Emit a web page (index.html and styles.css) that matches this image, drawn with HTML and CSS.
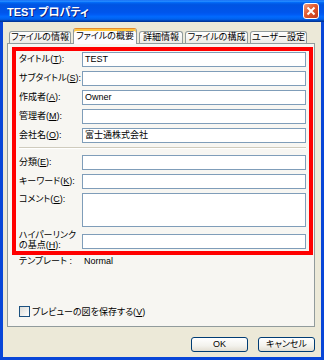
FILE: index.html
```html
<!DOCTYPE html>
<html>
<head>
    <title>TEST プロパティ</title>
    <meta charset="utf-8">
    <link rel="stylesheet" href="styles.css">
</head>
<body>
    <div class="window">
        <div class="titlebar">
            <span class="title">TEST プロパティ</span>
            <span class="close">
                <svg width="16" height="16" viewBox="0 0 16 16">
                    <defs>
                        <linearGradient id="closeGrad" x1="0" y1="0" x2="1" y2="1">
                            <stop offset="0" stop-color="#f4a386"/>
                            <stop offset="0.45" stop-color="#e2592f"/>
                            <stop offset="1" stop-color="#c0361a"/>
                        </linearGradient>
                    </defs>
                    <rect x="0.5" y="0.5" width="15" height="15" rx="2.5" fill="url(#closeGrad)" stroke="#fff"/>
                    <path d="M4.5 4.5 L11.5 11.5 M11.5 4.5 L4.5 11.5" stroke="#fff" stroke-width="2"/>
                </svg>
            </span>
        </div>
        <div class="client">
            <div class="tabs">
                <div class="tab t1">ファイルの情報</div>
                <div class="tab t2 active">ファイルの概要</div>
                <div class="tab t3">詳細情報</div>
                <div class="tab t4">ファイルの構成</div>
                <div class="tab t5">ユーザー設定</div>
            </div>
            <div class="panel">
                <div class="fields">
                    <div class="row"><label>タイトル(<u>T</u>):</label><div class="field">TEST</div></div>
                    <div class="row"><label>サブタイトル(<u>S</u>):</label><div class="field"></div></div>
                    <div class="row"><label>作成者(<u>A</u>):</label><div class="field">Owner</div></div>
                    <div class="row"><label>管理者(<u>M</u>):</label><div class="field"></div></div>
                    <div class="row"><label>会社名(<u>O</u>):</label><div class="field">富士通株式会社</div></div>
                    <div class="sep"></div>
                    <div class="row"><label>分類(<u>E</u>):</label><div class="field"></div></div>
                    <div class="row"><label>キーワード(<u>K</u>):</label><div class="field"></div></div>
                    <div class="row comment"><label>コメント(<u>C</u>):</label><div class="field"></div></div>
                    <div class="row link"><label>ハイパーリンク<br>の基点(<u>H</u>):</label><div class="field"></div></div>
                </div>
                <div class="template"><span class="template-label">テンプレート :</span><span>Normal</span></div>
                <div class="check"><span class="box"></span>プレビューの図を保存する(<u>V</u>)</div>
            </div>
            <div class="buttons">
                <button>OK</button>
                <button>キャンセル</button>
            </div>
        </div>
    </div>
</body>
</html>
```

FILE: styles.css
```css
/* General styling */
* {
    box-sizing: border-box;
}
body {
    margin: 0;
    font-family: "Liberation Sans", "Noto Sans CJK JP", sans-serif;
    font-size: 9px;
    font-feature-settings: "palt";
    color: #000;
}
u {
    text-decoration: underline;
}

/* Window frame */
.window {
    width: 324px;
    height: 360px;
    display: flex;
    flex-direction: column;
}
.titlebar {
    height: 22px;
    flex: none;
    display: flex;
    align-items: center;
    justify-content: space-between;
    padding: 0 5px 0 7px;
    background: linear-gradient(to bottom, #0058ee 0%, #3593ff 4%, #288eff 6%, #127dff 8%, #036ffc 10%, #0262ee 14%, #0057e5 20%, #0054e3 24%, #0055eb 56%, #005bf5 66%, #026afe 76%, #0062ef 86%, #0052d6 92%, #0040ab 94%, #003092 100%);
}
.title {
    color: #fff;
    font-weight: bold;
    font-size: 11px;
    text-shadow: 1px 1px 0 #0a1e80;
}
.close {
    display: flex;
    width: 16px;
    height: 16px;
}
.client {
    flex: 1;
    display: flex;
    flex-direction: column;
    background: #ece9d8;
    border: 3px solid #0846d8;
    border-top: 0;
    padding: 6px 6px 0 4px;
}

/* Tabs */
.tabs {
    display: flex;
    align-items: flex-end;
    gap: 2px;
    height: 15px;
    padding-left: 2px;
}
.tab {
    height: 12px;
    border: 1px solid #919b9c;
    border-bottom: 0;
    border-radius: 3px 3px 0 0;
    background: linear-gradient(to bottom, #fff, #ecebe6);
    line-height: 11px;
    text-align: center;
    white-space: nowrap;
}
.tab.active {
    height: 16px;
    margin-bottom: -1px;
    position: relative;
    z-index: 1;
    background: #fcfcfe;
    border-top: 1px solid #e68b2c;
    box-shadow: inset 0 2px 0 #ffc73c;
    line-height: 15px;
}
.t1 { width: 62px; }
.t2 { width: 64px; }
.t3 { width: 44px; }
.t4 { width: 63px; }
.t5 { width: 57px; }

/* Tab page */
.panel {
    height: 284px;
    display: flex;
    flex-direction: column;
    border: 1px solid #919b9c;
    background: #f7f6f2;
    padding: 3px 1px 0 4px;
}
.fields {
    border: 4px solid #ff0000;
    padding: 1px 3px 2px 3px;
}
.row {
    display: flex;
    align-items: center;
    height: 15px;
    margin-bottom: 4px;
}
.row label {
    width: 63px;
    flex: none;
    line-height: 13px;
    white-space: nowrap;
}
.field {
    flex: 1;
    height: 15px;
    border: 1px solid #7f9db9;
    background: #fff;
    padding: 0 2px;
    line-height: 13px;
}
.sep {
    margin: 3px 0 6px;
    border-top: 1px solid #cfcbbd;
    border-bottom: 1px solid #fff;
}
.row.comment {
    height: 34px;
    align-items: flex-start;
    margin-bottom: 7px;
}
.row.comment .field {
    height: 34px;
}
.row.link {
    margin-bottom: 0;
}
.row.link label {
    line-height: 10px;
    margin-top: -4px;
}

.template {
    height: 12px;
    line-height: 12px;
    padding-left: 7px;
    display: flex;
}
.template-label {
    width: 65px;
}
.check {
    margin-top: auto;
    margin-bottom: 9px;
    padding-left: 7px;
    display: flex;
    align-items: center;
    height: 11px;
}
.box {
    width: 11px;
    height: 11px;
    border: 1px solid #1c5180;
    background: linear-gradient(135deg, #dcdcd7, #fff);
    margin-right: 2px;
}

/* Buttons */
.buttons {
    display: flex;
    justify-content: flex-end;
    gap: 10px;
    margin-top: 10px;
}
button {
    width: 57px;
    height: 15px;
    padding: 0;
    border: 1px solid #003c74;
    border-radius: 3px;
    background: linear-gradient(to bottom, #fff, #f3f2ed 60%, #e3ded2);
    font-family: inherit;
    font-size: 9px;
    font-feature-settings: "palt";
    line-height: 13px;
    color: #000;
}
```
